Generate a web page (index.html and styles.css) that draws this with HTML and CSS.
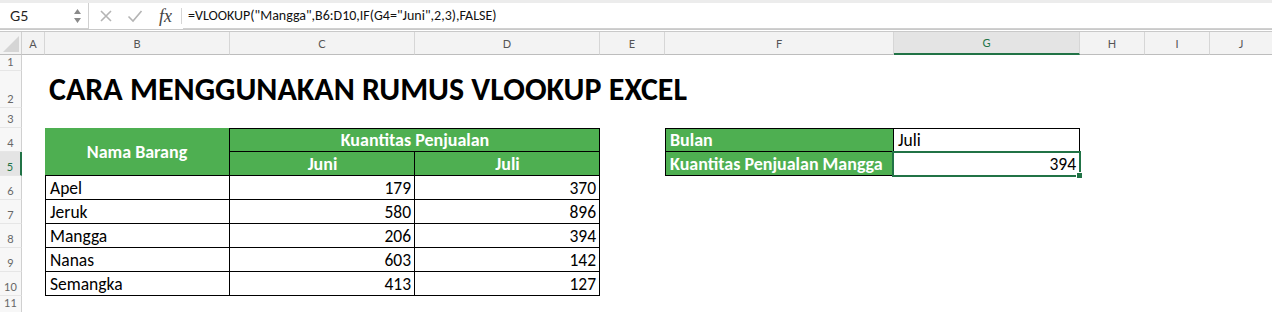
FILE: index.html
```html
<!DOCTYPE html>
<html>
<head>
<meta charset="utf-8">
<link rel="stylesheet" href="styles.css">
</head>
<body>
<div class="bar">
  <div class="namebox"><span class="ref">G5</span>
    <span class="spin"><svg width="9" height="18" viewBox="0 0 9 18"><path d="M4.5 2 L8 7 L1 7 Z M1 11 L8 11 L4.5 16 Z" fill="#8a8a8a"/></svg></span>
  </div>
  <div class="tools">
    <svg class="ico" width="14" height="14" viewBox="0 0 14 14"><path d="M2 2 L12 12 M12 2 L2 12" stroke="#b4b4b4" stroke-width="1.6" fill="none"/></svg>
    <svg class="ico" width="16" height="14" viewBox="0 0 16 14"><path d="M1.5 7.5 L6 12 L14.5 2" stroke="#b4b4b4" stroke-width="1.6" fill="none"/></svg>
    <span class="fx">fx</span>
  </div>
  <div class="formula">=VLOOKUP("Mangga",B6:D10,IF(G4="Juni",2,3),FALSE)</div>
</div>
<div class="sheet">
  <div class="corner"><svg width="16" height="16" viewBox="0 0 16 16"><path d="M16 0 L16 16 L0 16 Z" fill="#d5d5d5"/></svg></div>
  <div class="ch">A</div>
  <div class="ch">B</div>
  <div class="ch">C</div>
  <div class="ch">D</div>
  <div class="ch">E</div>
  <div class="ch">F</div>
  <div class="ch sel">G</div>
  <div class="ch">H</div>
  <div class="ch">I</div>
  <div class="ch last">J</div>

  <div class="rh r1">1</div>
  <div class="rh r2">2</div>
  <div class="rh r3">3</div>
  <div class="rh r4">4</div>
  <div class="rh r5 sel">5</div>
  <div class="rh r6">6</div>
  <div class="rh r7">7</div>
  <div class="rh r8">8</div>
  <div class="rh r9">9</div>
  <div class="rh r10">10</div>
  <div class="rh r11 lastrow">11</div>

  <div class="title">CARA MENGGUNAKAN RUMUS VLOOKUP EXCEL</div>

  <div class="cell hd nama">Nama Barang</div>
  <div class="cell hd kuant">Kuantitas Penjualan</div>
  <div class="cell hd cC r5 center">Juni</div>
  <div class="cell hd cD r5 center">Juli</div>

  <div class="cell cB r6">Apel</div><div class="cell cC r6 num">179</div><div class="cell cD r6 num">370</div>
  <div class="cell cB r7">Jeruk</div><div class="cell cC r7 num">580</div><div class="cell cD r7 num">896</div>
  <div class="cell cB r8">Mangga</div><div class="cell cC r8 num">206</div><div class="cell cD r8 num">394</div>
  <div class="cell cB r9">Nanas</div><div class="cell cC r9 num">603</div><div class="cell cD r9 num">142</div>
  <div class="cell cB r10">Semangka</div><div class="cell cC r10 num">413</div><div class="cell cD r10 num">127</div>

  <div class="cell hd cF r4 top">Bulan</div>
  <div class="cell cG r4 top">Juli</div>
  <div class="cell hd cF r5">Kuantitas Penjualan Mangga</div>
  <div class="cell cG r5 num active">394</div>
</div>
</body>
</html>
```
FILE: styles.css
```css
* { box-sizing: border-box; }
html, body { margin: 0; padding: 0; background: #fff; }
body { width: 1272px; height: 312px; overflow: hidden; font-family: "Carlito", "Lato", sans-serif; }

.bar {
  height: 32px;
  display: flex;
  align-items: stretch;
  background: #fff;
  border-top: 3px solid #ececec;
  border-bottom: 3px double #c9c9c9;
}
.namebox {
  width: 89px;
  display: flex;
  align-items: center;
  justify-content: space-between;
  padding: 0 6px 0 10px;
  border-right: 1px solid #d0d0d0;
  border-bottom: 1px solid #d0d0d0;
}
.ref { font-family: "Lato", sans-serif; font-size: 14px; color: #222; }
.spin { display: flex; align-items: center; }
.tools {
  width: 94px;
  display: flex;
  align-items: center;
  padding-left: 10px;
  background: #fff;
}
.ico { margin-right: 14px; }
.ico + .ico { margin-right: 16px; }
.fx {
  font-family: "Liberation Serif", serif;
  font-style: italic;
  font-size: 18px;
  color: #444;
  padding-right: 9px;
  border-right: 1px solid #d6d6d6;
  line-height: 16px;
}
.formula {
  flex: 1;
  display: flex;
  align-items: center;
  padding-left: 5px;
  font-family: "Carlito", "Lato", sans-serif;
  font-size: 14px;
  color: #111;
  border-bottom: 1px solid #d0d0d0;
}

.sheet {
  display: grid;
  grid-template-columns: 22px 23px 185px 185px 185px 65px 229px 186px 65px 65px 1fr;
  grid-template-rows: 23px 16px 37px 20px 24px 24px 24px 24px 24px 24px 24px 24px;
}

.corner {
  grid-row: 1; grid-column: 1;
  background: #f3f3f3;
  border-right: 1px solid #d0d0d0;
  border-bottom: 1px solid #bdbdbd;
  display: flex; align-items: flex-end; justify-content: flex-end;
  padding: 0 2px 2px 0;
}
.ch {
  grid-row: 1;
  background: #f3f3f3;
  border-right: 1px solid #d6d6d6;
  border-bottom: 1px solid #bdbdbd;
  display: flex; align-items: center; justify-content: center;
  font-family: "Lato", sans-serif;
  font-size: 11px;
  color: #555;
}
.ch.last { border-right: none; }
.ch.sel {
  background: #e4e4e4;
  color: #217346;
  border-bottom: 2px solid #217346;
}

.rh {
  grid-column: 1;
  background: #f7f7f7;
  border-right: 1px solid #d0d0d0;
  border-bottom: 1px solid #e6e6e6;
  display: flex; align-items: flex-end; justify-content: center;
  padding-bottom: 2px;
  font-family: "Lato", sans-serif;
  font-size: 11px;
  line-height: 12px;
  color: #666;
}
.rh.lastrow { padding-bottom: 10px; }
.rh.sel {
  background: #e4e4e4;
  color: #217346;
  border-right: 2px solid #217346;
}

.r1 { grid-row: 2; }
.r2 { grid-row: 3; }
.r3 { grid-row: 4; }
.r4 { grid-row: 5; }
.r5 { grid-row: 6; }
.r6 { grid-row: 7; }
.r7 { grid-row: 8; }
.r8 { grid-row: 9; }
.r9 { grid-row: 10; }
.r10 { grid-row: 11; }
.r11 { grid-row: 12; }

.cB { grid-column: 3; border-left: 1px solid #000; }
.cC { grid-column: 4; }
.cD { grid-column: 5; }
.cF { grid-column: 7; border-left: 1px solid #000; }
.cG { grid-column: 8; }

.title {
  grid-row: 3;
  grid-column: 3 / span 6;
  display: flex; align-items: flex-end;
  padding: 0 0 3px 4px;
  font-family: "Carlito", "Lato", sans-serif;
  font-weight: 700;
  font-size: 32px;
  line-height: 30px;
  color: #000;
  white-space: nowrap;
}

.cell {
  display: flex;
  align-items: flex-end;
  padding: 0 3px 3px 4px;
  font-size: 17.5px;
  line-height: 16px;
  color: #000;
  border-right: 1px solid #000;
  border-bottom: 1px solid #000;
  white-space: nowrap;
}
.cell.top { border-top: 1px solid #000; }
.num { justify-content: flex-end; }
.center { justify-content: center; }

.hd {
  background: #4eaf51;
  color: #fff;
  font-weight: 700;
  font-size: 18px;
}
.nama {
  grid-column: 3;
  grid-row: 5 / span 2;
  align-items: center;
  justify-content: center;
  padding: 0;
}
.kuant {
  grid-column: 4 / span 2;
  grid-row: 5;
  justify-content: center;
  border-top: 1px solid #000;
}

.active { position: relative; }
.active::after {
  content: "";
  position: absolute;
  left: -2px; top: -1px; right: -2px; bottom: -2px;
  border: 2px solid #217346;
}
.active::before {
  content: "";
  position: absolute;
  right: -4px; bottom: -4px;
  width: 5px; height: 5px;
  background: #217346;
  border: 1px solid #fff;
  z-index: 2;
}
```
